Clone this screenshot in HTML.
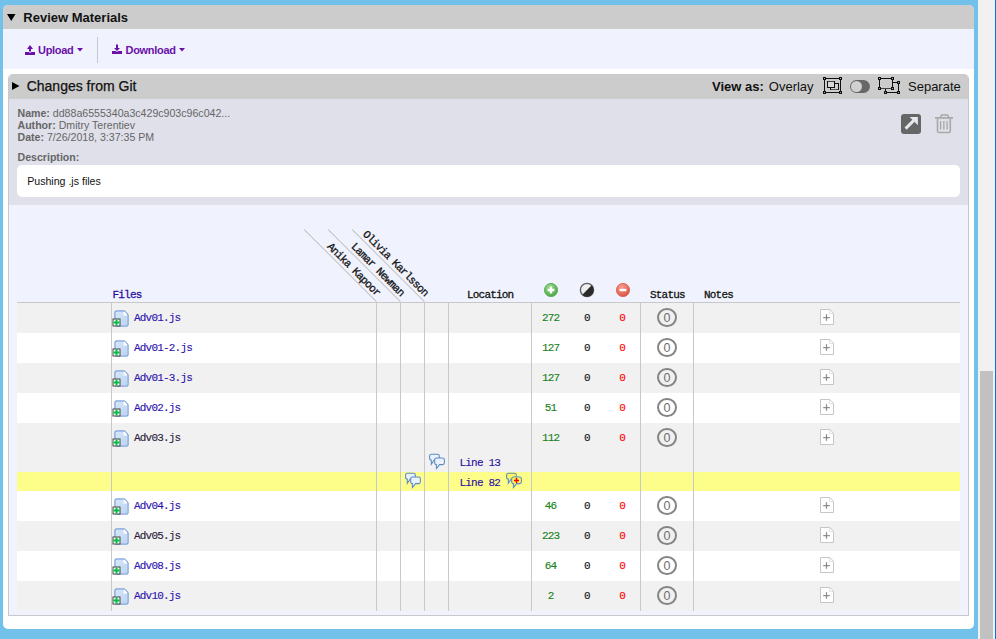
<!DOCTYPE html>
<html><head><meta charset="utf-8">
<style>
*{margin:0;padding:0;box-sizing:border-box}
html,body{width:996px;height:639px;overflow:hidden}
body{background:#72c1ea;position:relative;font-family:"Liberation Sans",sans-serif}
.a{position:absolute}
.t{position:absolute;white-space:nowrap;line-height:1}
.m{font-family:"Liberation Mono",monospace;-webkit-text-stroke:0.12px currentColor}
</style></head><body>
<div class="a" style="left:978px;top:0;width:17px;height:639px;background:#f1f1f1"></div>
<div class="a" style="left:980px;top:371px;width:13px;height:268px;background:#c1c1c1"></div>
<div class="a" style="left:995px;top:0;width:1px;height:639px;background:#0078d7"></div>
<div class="a" style="left:3px;top:5px;width:971px;height:624px;background:#fff;border-radius:5px;overflow:hidden"><div class="a" style="left:0;top:0;width:971px;height:24px;background:#cccccc"></div><div class="a" style="left:0;top:24px;width:971px;height:40px;background:#f0f3fe"></div></div>
<svg class="a" style="left:7px;top:14px" width="9" height="7" viewBox="0 0 9 7"><path d="M0 0H8.5L4.25 7Z" fill="#000"/></svg>
<div class="t" style="left:23.3px;top:10.70px;font-size:13px;color:#111;font-weight:bold;">Review Materials</div>
<svg class="a" style="left:24px;top:44px" width="12" height="12" viewBox="0 0 12 12"><path d="M6 1L9 5H7V7.5H5V5H3Z" fill="#6a10a8"/><path d="M1 8H4.5Q6 9.5 7.5 8H11V11H1Z" fill="#6a10a8"/></svg>
<div class="t" style="left:38px;top:44.69px;font-size:11px;color:#6a10a8;font-weight:bold;letter-spacing:-0.3px">Upload</div>
<svg class="a" style="left:77px;top:48px" width="6" height="4" viewBox="0 0 6 4"><path d="M0 0H6L3 3.5Z" fill="#6a10a8"/></svg>
<div class="a" style="left:97px;top:37px;width:1px;height:26px;background:#c8c8d0"></div>
<svg class="a" style="left:111px;top:44px" width="12" height="12" viewBox="0 0 12 12"><path d="M5 0.5H7V4H9L6 7L3 4H5Z" fill="#6a10a8"/><path d="M1 7H4.5Q6 8.5 7.5 7H11V10H1Z" fill="#6a10a8"/></svg>
<div class="t" style="left:125.5px;top:44.69px;font-size:11px;color:#6a10a8;font-weight:bold;letter-spacing:-0.3px">Download</div>
<svg class="a" style="left:179px;top:48px" width="6" height="4" viewBox="0 0 6 4"><path d="M0 0H6L3 3.5Z" fill="#6a10a8"/></svg>
<div class="a" style="left:8px;top:74px;width:961px;height:542px;background:#f0f3fd;border:1px solid #c8c8c8;border-top:none;border-radius:5px 5px 0 0;overflow:hidden"><div class="a" style="left:-1px;top:0;width:961px;height:24.5px;background:#cccccc"></div><div class="a" style="left:0;top:24.5px;width:959px;height:106.5px;background:#dfe0ea"></div></div>
<svg class="a" style="left:11.5px;top:82px" width="8" height="8" viewBox="0 0 8 8"><path d="M0 0L7.5 4L0 8Z" fill="#000"/></svg>
<div class="t" style="left:26.7px;top:78.75px;font-size:14px;color:#111;-webkit-text-stroke:0.25px #111">Changes from Git</div>
<div class="t" style="left:712px;top:80.10px;font-size:13px;color:#111;"><b>View as:</b></div>
<div class="t" style="left:768.8px;top:80.10px;font-size:13px;color:#111;">Overlay</div>
<div class="t" style="left:908px;top:80.10px;font-size:13px;color:#111;">Separate</div>
<svg class="a" style="left:820px;top:75px" width="25" height="21" viewBox="0 0 25 21">
<path d="M4.5 3.5H20.5V17.5H4.5Z" fill="none" stroke="#111" stroke-width="1"/>
<rect x="10.5" y="8.5" width="8" height="6" fill="#cfcfcf" stroke="#111" stroke-width="1"/>
<path d="M11 14.5H18" stroke="#555" stroke-width="1"/>
<rect x="7.5" y="6.5" width="7" height="6" fill="#d8d8d8" stroke="#111" stroke-width="1"/>
<path d="M8 6.5H14" stroke="#444" stroke-width="1"/>
<g fill="#111"><rect x="3" y="2" width="3" height="3"/><rect x="19" y="2" width="3" height="3"/><rect x="3" y="16" width="3" height="3"/><rect x="19" y="16" width="3" height="3"/></g>
<g fill="#9ab"><rect x="4" y="3" width="1" height="1"/><rect x="20" y="3" width="1" height="1"/><rect x="4" y="17" width="1" height="1"/><rect x="20" y="17" width="1" height="1"/></g>
</svg>
<div class="a" style="left:850px;top:80px;width:20px;height:13px;border-radius:6.5px;background:#686868"></div>
<div class="a" style="left:851px;top:81px;width:11px;height:11px;border-radius:50%;background:#d0d0d0"></div>
<svg class="a" style="left:875px;top:75px" width="28" height="21" viewBox="0 0 28 21">
<path d="M4.5 3.5H17.5V13.5H4.5Z" fill="none" stroke="#111" stroke-width="1"/>
<path d="M17.5 7.5H23.5V17.5H10.5V13.5" fill="none" stroke="#111" stroke-width="1"/>
<path d="M5 13.5H17" stroke="#444" stroke-width="1"/>
<g fill="#111"><rect x="3" y="2" width="3" height="3"/><rect x="16" y="2" width="3" height="3"/><rect x="3" y="12" width="3" height="3"/><rect x="16" y="12" width="3" height="3"/>
<rect x="22" y="6" width="3" height="3"/><rect x="22" y="16" width="3" height="3"/><rect x="9" y="16" width="3" height="3"/></g>
<g fill="#9ab"><rect x="4" y="3" width="1" height="1"/><rect x="17" y="3" width="1" height="1"/><rect x="4" y="13" width="1" height="1"/><rect x="17" y="13" width="1" height="1"/>
<rect x="23" y="7" width="1" height="1"/><rect x="23" y="17" width="1" height="1"/><rect x="10" y="17" width="1" height="1"/></g>
</svg>
<div class="t" style="left:17.5px;top:108.43px;font-size:10.6px;color:#666;"><b>Name:</b> dd88a6555340a3c429c903c96c042...</div>
<div class="t" style="left:17.5px;top:120.43px;font-size:10.6px;color:#666;"><b>Author:</b> Dmitry Terentiev</div>
<div class="t" style="left:17.5px;top:132.23px;font-size:10.6px;color:#666;"><b>Date:</b> 7/26/2018, 3:37:35 PM</div>
<div class="t" style="left:17.5px;top:152.43px;font-size:10.6px;color:#666;"><b>Description:</b></div>
<div class="a" style="left:17px;top:165px;width:943px;height:32px;background:#fff;border-radius:5px"></div>
<div class="t" style="left:27.2px;top:176.43px;font-size:10.6px;color:#111;">Pushing .js files</div>
<div class="a" style="left:901px;top:114px;width:20px;height:20px;background:#666;border-radius:3px"></div>
<svg class="a" style="left:901px;top:114px" width="20" height="20" viewBox="0 0 20 20">
<path d="M4.6 14.6L12.6 6.6" stroke="#e8e8f0" stroke-width="2.9"/>
<path d="M8.6 2.9H16.9V11.2Z" fill="#e8e8f0"/>
</svg>
<svg class="a" style="left:931px;top:111px" width="26" height="26" viewBox="0 0 26 26">
<path d="M4 6.9H22" stroke="#a8a8a8" stroke-width="1.7"/>
<path d="M9.3 6.6L10.6 4H16.6L17.9 6.6" fill="none" stroke="#a8a8a8" stroke-width="1.5"/>
<path d="M6.5 7.5V20Q6.5 21.5 8 21.5H17.8Q19.3 21.5 19.3 20V7.5" fill="none" stroke="#a8a8a8" stroke-width="1.6"/>
<path d="M9.6 10V18.4M12.85 10V18.4M16.1 10V18.4" stroke="#a8a8a8" stroke-width="1.3"/>
</svg>
<div class="t m" style="left:112.5px;top:289.77px;font-size:11px;letter-spacing:-0.8px;color:#2a10a0;-webkit-text-stroke:0.28px currentColor">Files</div>
<div class="t m" style="left:467px;top:289.77px;font-size:11px;letter-spacing:-0.8px;color:#111;-webkit-text-stroke:0.28px currentColor">Location</div>
<div class="t m" style="left:650px;top:289.77px;font-size:11px;letter-spacing:-0.8px;color:#111;-webkit-text-stroke:0.28px currentColor">Status</div>
<div class="t m" style="left:704px;top:289.77px;font-size:11px;letter-spacing:-0.8px;color:#111;-webkit-text-stroke:0.28px currentColor">Notes</div>
<svg class="a" style="left:543px;top:282px" width="16" height="16" viewBox="0 0 16 16">
<defs><radialGradient id="gg" cx="0.4" cy="0.3" r="0.8"><stop offset="0" stop-color="#9fdc8f"/><stop offset="1" stop-color="#3f9f3a"/></radialGradient>
<radialGradient id="rg" cx="0.4" cy="0.3" r="0.8"><stop offset="0" stop-color="#f6a090"/><stop offset="1" stop-color="#d9483a"/></radialGradient></defs>
<circle cx="8" cy="8" r="6.6" fill="url(#gg)" stroke="#62b25c" stroke-width="1"/>
<path d="M8 4.6V11.4M4.6 8H11.4" stroke="#fff" stroke-width="2.4"/>
</svg>
<svg class="a" style="left:579px;top:282px" width="16" height="16" viewBox="0 0 16 16">
<circle cx="8" cy="8" r="6.6" fill="#efefef" stroke="#5e5e5e" stroke-width="1.3"/>
<path d="M12.7 3.3A6.6 6.6 0 0 1 3.3 12.7Z" fill="#2b2b2b"/>
</svg>
<svg class="a" style="left:615px;top:282px" width="16" height="16" viewBox="0 0 16 16">
<circle cx="8" cy="8" r="6.6" fill="url(#rg)" stroke="#e06a5c" stroke-width="1"/>
<path d="M4.6 8H11.4" stroke="#fff" stroke-width="2.4"/>
</svg>
<div class="a" style="left:274px;top:286px;width:102px;height:16px;border-bottom:1px solid #c4c4c4;transform-origin:100% 100%;transform:rotate(45deg)"><div class="t m" style="right:3.5px;bottom:0.5px;font-size:11px;letter-spacing:-0.75px;color:#111;-webkit-text-stroke:0.28px #111">Anika Kapoor</div></div>
<div class="a" style="left:298px;top:286px;width:102px;height:16px;border-bottom:1px solid #c4c4c4;transform-origin:100% 100%;transform:rotate(45deg)"><div class="t m" style="right:3.5px;bottom:0.5px;font-size:11px;letter-spacing:-0.75px;color:#111;-webkit-text-stroke:0.28px #111">Lamar Newman</div></div>
<div class="a" style="left:322px;top:286px;width:102px;height:16px;border-bottom:1px solid #c4c4c4;transform-origin:100% 100%;transform:rotate(45deg)"><div class="t m" style="right:3.5px;bottom:0.5px;font-size:11px;letter-spacing:-0.75px;color:#111;-webkit-text-stroke:0.28px #111">Olivia Karlsson</div></div>
<div class="a" style="left:17px;top:302px;width:943px;height:1px;background:#c8c8c8"></div>
<div class="a" style="left:17px;top:303px;width:943px;height:30px;background:#f1f1f1"></div>
<div class="a" style="left:17px;top:333px;width:943px;height:30px;background:#ffffff"></div>
<div class="a" style="left:17px;top:363px;width:943px;height:30px;background:#f1f1f1"></div>
<div class="a" style="left:17px;top:393px;width:943px;height:30px;background:#ffffff"></div>
<div class="a" style="left:17px;top:423px;width:943px;height:49px;background:#f1f1f1"></div>
<div class="a" style="left:17px;top:491px;width:943px;height:30px;background:#ffffff"></div>
<div class="a" style="left:17px;top:521px;width:943px;height:30px;background:#f1f1f1"></div>
<div class="a" style="left:17px;top:551px;width:943px;height:30px;background:#ffffff"></div>
<div class="a" style="left:17px;top:581px;width:943px;height:30px;background:#f1f1f1"></div>
<div class="a" style="left:17px;top:472px;width:943px;height:19px;background:#fdfd8a"></div>
<div class="a" style="left:111px;top:303px;width:1px;height:308px;background:#c8c8c8"></div>
<div class="a" style="left:376px;top:303px;width:1px;height:308px;background:#c8c8c8"></div>
<div class="a" style="left:400px;top:303px;width:1px;height:308px;background:#c8c8c8"></div>
<div class="a" style="left:424px;top:303px;width:1px;height:308px;background:#c8c8c8"></div>
<div class="a" style="left:448px;top:303px;width:1px;height:308px;background:#c8c8c8"></div>
<div class="a" style="left:531px;top:303px;width:1px;height:308px;background:#c8c8c8"></div>
<div class="a" style="left:640px;top:303px;width:1px;height:308px;background:#c8c8c8"></div>
<div class="a" style="left:693px;top:303px;width:1px;height:308px;background:#c8c8c8"></div>
<svg class="a" style="left:111.5px;top:309.5px" width="17" height="17" viewBox="0 0 17 17">
<defs><linearGradient id="fg0" x1="0" y1="0" x2="1" y2="1"><stop offset="0" stop-color="#d6e6f8"/><stop offset="1" stop-color="#bcd5f2"/></linearGradient></defs>
<path d="M4 1H12.6L16 4.4V15Q16 16 15 16H4Q3 16 3 15V2Q3 1 4 1Z" fill="#fff" stroke="#4b80cf" stroke-width="1"/>
<path d="M4 2H11.5V5.5H15V15H4Z" fill="url(#fg0)"/>
<rect x="1" y="9" width="7" height="7" fill="#fff" stroke="#444" stroke-width="1"/>
<path d="M3.5 9.5h2v6h-2z M1.5 11.5h6v2h-6z" fill="#00c040"/>
</svg>
<div class="t m" style="left:134px;top:312.57px;font-size:11px;letter-spacing:-0.8px;color:#2c12ac;">Adv01.js</div>
<div class="t m" style="left:520.2px;width:60px;text-align:center;top:312.57px;font-size:11px;letter-spacing:-0.8px;text-indent:0.8px;color:#158015">272</div>
<div class="t m" style="left:556.4px;width:60px;text-align:center;top:312.57px;font-size:11px;letter-spacing:-0.8px;text-indent:0.8px;color:#111">0</div>
<div class="t m" style="left:591.7px;width:60px;text-align:center;top:312.57px;font-size:11px;letter-spacing:-0.8px;text-indent:0.8px;color:#ff0000">0</div>
<div class="a" style="left:657.3px;top:308px;width:19.6px;height:19.2px;border:2px solid #858585;border-radius:50%"></div>
<div class="t" style="left:657px;top:312px;width:20px;text-align:center;font-family:'Liberation Sans';font-size:12.5px;color:#6e6e6e">0</div>
<svg class="a" style="left:820px;top:309px" width="15" height="17" viewBox="0 0 15 17">
<path d="M0.5 0.5H9.8L13.5 4.2V15.5H0.5Z" fill="#fff" stroke="#c6c6c6" stroke-width="1"/>
<path d="M9.5 1V4.5H13" fill="none" stroke="#e4e4e4" stroke-width="1"/>
<path d="M6.5 5.2V11.8M3.2 8.5H9.8" stroke="#8c8c8c" stroke-width="1.25"/>
</svg>
<svg class="a" style="left:111.5px;top:339.5px" width="17" height="17" viewBox="0 0 17 17">
<defs><linearGradient id="fg1" x1="0" y1="0" x2="1" y2="1"><stop offset="0" stop-color="#d6e6f8"/><stop offset="1" stop-color="#bcd5f2"/></linearGradient></defs>
<path d="M4 1H12.6L16 4.4V15Q16 16 15 16H4Q3 16 3 15V2Q3 1 4 1Z" fill="#fff" stroke="#4b80cf" stroke-width="1"/>
<path d="M4 2H11.5V5.5H15V15H4Z" fill="url(#fg1)"/>
<rect x="1" y="9" width="7" height="7" fill="#fff" stroke="#444" stroke-width="1"/>
<path d="M3.5 9.5h2v6h-2z M1.5 11.5h6v2h-6z" fill="#00c040"/>
</svg>
<div class="t m" style="left:134px;top:342.57px;font-size:11px;letter-spacing:-0.8px;color:#2c12ac;">Adv01-2.js</div>
<div class="t m" style="left:520.2px;width:60px;text-align:center;top:342.57px;font-size:11px;letter-spacing:-0.8px;text-indent:0.8px;color:#158015">127</div>
<div class="t m" style="left:556.4px;width:60px;text-align:center;top:342.57px;font-size:11px;letter-spacing:-0.8px;text-indent:0.8px;color:#111">0</div>
<div class="t m" style="left:591.7px;width:60px;text-align:center;top:342.57px;font-size:11px;letter-spacing:-0.8px;text-indent:0.8px;color:#ff0000">0</div>
<div class="a" style="left:657.3px;top:338px;width:19.6px;height:19.2px;border:2px solid #858585;border-radius:50%"></div>
<div class="t" style="left:657px;top:342px;width:20px;text-align:center;font-family:'Liberation Sans';font-size:12.5px;color:#6e6e6e">0</div>
<svg class="a" style="left:820px;top:339px" width="15" height="17" viewBox="0 0 15 17">
<path d="M0.5 0.5H9.8L13.5 4.2V15.5H0.5Z" fill="#fff" stroke="#c6c6c6" stroke-width="1"/>
<path d="M9.5 1V4.5H13" fill="none" stroke="#e4e4e4" stroke-width="1"/>
<path d="M6.5 5.2V11.8M3.2 8.5H9.8" stroke="#8c8c8c" stroke-width="1.25"/>
</svg>
<svg class="a" style="left:111.5px;top:369.5px" width="17" height="17" viewBox="0 0 17 17">
<defs><linearGradient id="fg2" x1="0" y1="0" x2="1" y2="1"><stop offset="0" stop-color="#d6e6f8"/><stop offset="1" stop-color="#bcd5f2"/></linearGradient></defs>
<path d="M4 1H12.6L16 4.4V15Q16 16 15 16H4Q3 16 3 15V2Q3 1 4 1Z" fill="#fff" stroke="#4b80cf" stroke-width="1"/>
<path d="M4 2H11.5V5.5H15V15H4Z" fill="url(#fg2)"/>
<rect x="1" y="9" width="7" height="7" fill="#fff" stroke="#444" stroke-width="1"/>
<path d="M3.5 9.5h2v6h-2z M1.5 11.5h6v2h-6z" fill="#00c040"/>
</svg>
<div class="t m" style="left:134px;top:372.57px;font-size:11px;letter-spacing:-0.8px;color:#2c12ac;">Adv01-3.js</div>
<div class="t m" style="left:520.2px;width:60px;text-align:center;top:372.57px;font-size:11px;letter-spacing:-0.8px;text-indent:0.8px;color:#158015">127</div>
<div class="t m" style="left:556.4px;width:60px;text-align:center;top:372.57px;font-size:11px;letter-spacing:-0.8px;text-indent:0.8px;color:#111">0</div>
<div class="t m" style="left:591.7px;width:60px;text-align:center;top:372.57px;font-size:11px;letter-spacing:-0.8px;text-indent:0.8px;color:#ff0000">0</div>
<div class="a" style="left:657.3px;top:368px;width:19.6px;height:19.2px;border:2px solid #858585;border-radius:50%"></div>
<div class="t" style="left:657px;top:372px;width:20px;text-align:center;font-family:'Liberation Sans';font-size:12.5px;color:#6e6e6e">0</div>
<svg class="a" style="left:820px;top:369px" width="15" height="17" viewBox="0 0 15 17">
<path d="M0.5 0.5H9.8L13.5 4.2V15.5H0.5Z" fill="#fff" stroke="#c6c6c6" stroke-width="1"/>
<path d="M9.5 1V4.5H13" fill="none" stroke="#e4e4e4" stroke-width="1"/>
<path d="M6.5 5.2V11.8M3.2 8.5H9.8" stroke="#8c8c8c" stroke-width="1.25"/>
</svg>
<svg class="a" style="left:111.5px;top:399.5px" width="17" height="17" viewBox="0 0 17 17">
<defs><linearGradient id="fg3" x1="0" y1="0" x2="1" y2="1"><stop offset="0" stop-color="#d6e6f8"/><stop offset="1" stop-color="#bcd5f2"/></linearGradient></defs>
<path d="M4 1H12.6L16 4.4V15Q16 16 15 16H4Q3 16 3 15V2Q3 1 4 1Z" fill="#fff" stroke="#4b80cf" stroke-width="1"/>
<path d="M4 2H11.5V5.5H15V15H4Z" fill="url(#fg3)"/>
<rect x="1" y="9" width="7" height="7" fill="#fff" stroke="#444" stroke-width="1"/>
<path d="M3.5 9.5h2v6h-2z M1.5 11.5h6v2h-6z" fill="#00c040"/>
</svg>
<div class="t m" style="left:134px;top:402.57px;font-size:11px;letter-spacing:-0.8px;color:#2c12ac;">Adv02.js</div>
<div class="t m" style="left:520.2px;width:60px;text-align:center;top:402.57px;font-size:11px;letter-spacing:-0.8px;text-indent:0.8px;color:#158015">51</div>
<div class="t m" style="left:556.4px;width:60px;text-align:center;top:402.57px;font-size:11px;letter-spacing:-0.8px;text-indent:0.8px;color:#111">0</div>
<div class="t m" style="left:591.7px;width:60px;text-align:center;top:402.57px;font-size:11px;letter-spacing:-0.8px;text-indent:0.8px;color:#ff0000">0</div>
<div class="a" style="left:657.3px;top:398px;width:19.6px;height:19.2px;border:2px solid #858585;border-radius:50%"></div>
<div class="t" style="left:657px;top:402px;width:20px;text-align:center;font-family:'Liberation Sans';font-size:12.5px;color:#6e6e6e">0</div>
<svg class="a" style="left:820px;top:399px" width="15" height="17" viewBox="0 0 15 17">
<path d="M0.5 0.5H9.8L13.5 4.2V15.5H0.5Z" fill="#fff" stroke="#c6c6c6" stroke-width="1"/>
<path d="M9.5 1V4.5H13" fill="none" stroke="#e4e4e4" stroke-width="1"/>
<path d="M6.5 5.2V11.8M3.2 8.5H9.8" stroke="#8c8c8c" stroke-width="1.25"/>
</svg>
<svg class="a" style="left:111.5px;top:429.5px" width="17" height="17" viewBox="0 0 17 17">
<defs><linearGradient id="fg4" x1="0" y1="0" x2="1" y2="1"><stop offset="0" stop-color="#d6e6f8"/><stop offset="1" stop-color="#bcd5f2"/></linearGradient></defs>
<path d="M4 1H12.6L16 4.4V15Q16 16 15 16H4Q3 16 3 15V2Q3 1 4 1Z" fill="#fff" stroke="#4b80cf" stroke-width="1"/>
<path d="M4 2H11.5V5.5H15V15H4Z" fill="url(#fg4)"/>
<rect x="1" y="9" width="7" height="7" fill="#fff" stroke="#444" stroke-width="1"/>
<path d="M3.5 9.5h2v6h-2z M1.5 11.5h6v2h-6z" fill="#00c040"/>
</svg>
<div class="t m" style="left:134px;top:432.57px;font-size:11px;letter-spacing:-0.8px;color:#2a1a38;">Adv03.js</div>
<div class="t m" style="left:520.2px;width:60px;text-align:center;top:432.57px;font-size:11px;letter-spacing:-0.8px;text-indent:0.8px;color:#158015">112</div>
<div class="t m" style="left:556.4px;width:60px;text-align:center;top:432.57px;font-size:11px;letter-spacing:-0.8px;text-indent:0.8px;color:#111">0</div>
<div class="t m" style="left:591.7px;width:60px;text-align:center;top:432.57px;font-size:11px;letter-spacing:-0.8px;text-indent:0.8px;color:#ff0000">0</div>
<div class="a" style="left:657.3px;top:428px;width:19.6px;height:19.2px;border:2px solid #858585;border-radius:50%"></div>
<div class="t" style="left:657px;top:432px;width:20px;text-align:center;font-family:'Liberation Sans';font-size:12.5px;color:#6e6e6e">0</div>
<svg class="a" style="left:820px;top:429px" width="15" height="17" viewBox="0 0 15 17">
<path d="M0.5 0.5H9.8L13.5 4.2V15.5H0.5Z" fill="#fff" stroke="#c6c6c6" stroke-width="1"/>
<path d="M9.5 1V4.5H13" fill="none" stroke="#e4e4e4" stroke-width="1"/>
<path d="M6.5 5.2V11.8M3.2 8.5H9.8" stroke="#8c8c8c" stroke-width="1.25"/>
</svg>
<svg class="a" style="left:111.5px;top:497.5px" width="17" height="17" viewBox="0 0 17 17">
<defs><linearGradient id="fg5" x1="0" y1="0" x2="1" y2="1"><stop offset="0" stop-color="#d6e6f8"/><stop offset="1" stop-color="#bcd5f2"/></linearGradient></defs>
<path d="M4 1H12.6L16 4.4V15Q16 16 15 16H4Q3 16 3 15V2Q3 1 4 1Z" fill="#fff" stroke="#4b80cf" stroke-width="1"/>
<path d="M4 2H11.5V5.5H15V15H4Z" fill="url(#fg5)"/>
<rect x="1" y="9" width="7" height="7" fill="#fff" stroke="#444" stroke-width="1"/>
<path d="M3.5 9.5h2v6h-2z M1.5 11.5h6v2h-6z" fill="#00c040"/>
</svg>
<div class="t m" style="left:134px;top:500.57px;font-size:11px;letter-spacing:-0.8px;color:#2c12ac;">Adv04.js</div>
<div class="t m" style="left:520.2px;width:60px;text-align:center;top:500.57px;font-size:11px;letter-spacing:-0.8px;text-indent:0.8px;color:#158015">46</div>
<div class="t m" style="left:556.4px;width:60px;text-align:center;top:500.57px;font-size:11px;letter-spacing:-0.8px;text-indent:0.8px;color:#111">0</div>
<div class="t m" style="left:591.7px;width:60px;text-align:center;top:500.57px;font-size:11px;letter-spacing:-0.8px;text-indent:0.8px;color:#ff0000">0</div>
<div class="a" style="left:657.3px;top:496px;width:19.6px;height:19.2px;border:2px solid #858585;border-radius:50%"></div>
<div class="t" style="left:657px;top:500px;width:20px;text-align:center;font-family:'Liberation Sans';font-size:12.5px;color:#6e6e6e">0</div>
<svg class="a" style="left:820px;top:497px" width="15" height="17" viewBox="0 0 15 17">
<path d="M0.5 0.5H9.8L13.5 4.2V15.5H0.5Z" fill="#fff" stroke="#c6c6c6" stroke-width="1"/>
<path d="M9.5 1V4.5H13" fill="none" stroke="#e4e4e4" stroke-width="1"/>
<path d="M6.5 5.2V11.8M3.2 8.5H9.8" stroke="#8c8c8c" stroke-width="1.25"/>
</svg>
<svg class="a" style="left:111.5px;top:527.5px" width="17" height="17" viewBox="0 0 17 17">
<defs><linearGradient id="fg6" x1="0" y1="0" x2="1" y2="1"><stop offset="0" stop-color="#d6e6f8"/><stop offset="1" stop-color="#bcd5f2"/></linearGradient></defs>
<path d="M4 1H12.6L16 4.4V15Q16 16 15 16H4Q3 16 3 15V2Q3 1 4 1Z" fill="#fff" stroke="#4b80cf" stroke-width="1"/>
<path d="M4 2H11.5V5.5H15V15H4Z" fill="url(#fg6)"/>
<rect x="1" y="9" width="7" height="7" fill="#fff" stroke="#444" stroke-width="1"/>
<path d="M3.5 9.5h2v6h-2z M1.5 11.5h6v2h-6z" fill="#00c040"/>
</svg>
<div class="t m" style="left:134px;top:530.57px;font-size:11px;letter-spacing:-0.8px;color:#2a1a38;">Adv05.js</div>
<div class="t m" style="left:520.2px;width:60px;text-align:center;top:530.57px;font-size:11px;letter-spacing:-0.8px;text-indent:0.8px;color:#158015">223</div>
<div class="t m" style="left:556.4px;width:60px;text-align:center;top:530.57px;font-size:11px;letter-spacing:-0.8px;text-indent:0.8px;color:#111">0</div>
<div class="t m" style="left:591.7px;width:60px;text-align:center;top:530.57px;font-size:11px;letter-spacing:-0.8px;text-indent:0.8px;color:#ff0000">0</div>
<div class="a" style="left:657.3px;top:526px;width:19.6px;height:19.2px;border:2px solid #858585;border-radius:50%"></div>
<div class="t" style="left:657px;top:530px;width:20px;text-align:center;font-family:'Liberation Sans';font-size:12.5px;color:#6e6e6e">0</div>
<svg class="a" style="left:820px;top:527px" width="15" height="17" viewBox="0 0 15 17">
<path d="M0.5 0.5H9.8L13.5 4.2V15.5H0.5Z" fill="#fff" stroke="#c6c6c6" stroke-width="1"/>
<path d="M9.5 1V4.5H13" fill="none" stroke="#e4e4e4" stroke-width="1"/>
<path d="M6.5 5.2V11.8M3.2 8.5H9.8" stroke="#8c8c8c" stroke-width="1.25"/>
</svg>
<svg class="a" style="left:111.5px;top:557.5px" width="17" height="17" viewBox="0 0 17 17">
<defs><linearGradient id="fg7" x1="0" y1="0" x2="1" y2="1"><stop offset="0" stop-color="#d6e6f8"/><stop offset="1" stop-color="#bcd5f2"/></linearGradient></defs>
<path d="M4 1H12.6L16 4.4V15Q16 16 15 16H4Q3 16 3 15V2Q3 1 4 1Z" fill="#fff" stroke="#4b80cf" stroke-width="1"/>
<path d="M4 2H11.5V5.5H15V15H4Z" fill="url(#fg7)"/>
<rect x="1" y="9" width="7" height="7" fill="#fff" stroke="#444" stroke-width="1"/>
<path d="M3.5 9.5h2v6h-2z M1.5 11.5h6v2h-6z" fill="#00c040"/>
</svg>
<div class="t m" style="left:134px;top:560.57px;font-size:11px;letter-spacing:-0.8px;color:#2c12ac;">Adv08.js</div>
<div class="t m" style="left:520.2px;width:60px;text-align:center;top:560.57px;font-size:11px;letter-spacing:-0.8px;text-indent:0.8px;color:#158015">64</div>
<div class="t m" style="left:556.4px;width:60px;text-align:center;top:560.57px;font-size:11px;letter-spacing:-0.8px;text-indent:0.8px;color:#111">0</div>
<div class="t m" style="left:591.7px;width:60px;text-align:center;top:560.57px;font-size:11px;letter-spacing:-0.8px;text-indent:0.8px;color:#ff0000">0</div>
<div class="a" style="left:657.3px;top:556px;width:19.6px;height:19.2px;border:2px solid #858585;border-radius:50%"></div>
<div class="t" style="left:657px;top:560px;width:20px;text-align:center;font-family:'Liberation Sans';font-size:12.5px;color:#6e6e6e">0</div>
<svg class="a" style="left:820px;top:557px" width="15" height="17" viewBox="0 0 15 17">
<path d="M0.5 0.5H9.8L13.5 4.2V15.5H0.5Z" fill="#fff" stroke="#c6c6c6" stroke-width="1"/>
<path d="M9.5 1V4.5H13" fill="none" stroke="#e4e4e4" stroke-width="1"/>
<path d="M6.5 5.2V11.8M3.2 8.5H9.8" stroke="#8c8c8c" stroke-width="1.25"/>
</svg>
<svg class="a" style="left:111.5px;top:587.5px" width="17" height="17" viewBox="0 0 17 17">
<defs><linearGradient id="fg8" x1="0" y1="0" x2="1" y2="1"><stop offset="0" stop-color="#d6e6f8"/><stop offset="1" stop-color="#bcd5f2"/></linearGradient></defs>
<path d="M4 1H12.6L16 4.4V15Q16 16 15 16H4Q3 16 3 15V2Q3 1 4 1Z" fill="#fff" stroke="#4b80cf" stroke-width="1"/>
<path d="M4 2H11.5V5.5H15V15H4Z" fill="url(#fg8)"/>
<rect x="1" y="9" width="7" height="7" fill="#fff" stroke="#444" stroke-width="1"/>
<path d="M3.5 9.5h2v6h-2z M1.5 11.5h6v2h-6z" fill="#00c040"/>
</svg>
<div class="t m" style="left:134px;top:590.57px;font-size:11px;letter-spacing:-0.8px;color:#2c12ac;">Adv10.js</div>
<div class="t m" style="left:520.2px;width:60px;text-align:center;top:590.57px;font-size:11px;letter-spacing:-0.8px;text-indent:0.8px;color:#158015">2</div>
<div class="t m" style="left:556.4px;width:60px;text-align:center;top:590.57px;font-size:11px;letter-spacing:-0.8px;text-indent:0.8px;color:#111">0</div>
<div class="t m" style="left:591.7px;width:60px;text-align:center;top:590.57px;font-size:11px;letter-spacing:-0.8px;text-indent:0.8px;color:#ff0000">0</div>
<div class="a" style="left:657.3px;top:586px;width:19.6px;height:19.2px;border:2px solid #858585;border-radius:50%"></div>
<div class="t" style="left:657px;top:590px;width:20px;text-align:center;font-family:'Liberation Sans';font-size:12.5px;color:#6e6e6e">0</div>
<svg class="a" style="left:820px;top:587px" width="15" height="17" viewBox="0 0 15 17">
<path d="M0.5 0.5H9.8L13.5 4.2V15.5H0.5Z" fill="#fff" stroke="#c6c6c6" stroke-width="1"/>
<path d="M9.5 1V4.5H13" fill="none" stroke="#e4e4e4" stroke-width="1"/>
<path d="M6.5 5.2V11.8M3.2 8.5H9.8" stroke="#8c8c8c" stroke-width="1.25"/>
</svg>
<svg class="a" style="left:428px;top:453px" width="18" height="17" viewBox="0 0 18 17">
<path d="M3.4 1.2H9.5Q11.3 1.2 11.3 3V5.2Q11.3 7 9.5 7H6.2L3.3 11.3V7Q1.6 7 1.6 5.2V3Q1.6 1.2 3.4 1.2Z" fill="#e9f1fb" stroke="#5b8ac6" stroke-width="1.05"/>
<path d="M8.5 5H14.6Q16.4 5 16.4 6.8V9.8Q16.4 11.6 14.6 11.6H11.6L8.4 15.5V11.6Q6.7 11.6 6.7 9.8V6.8Q6.7 5 8.5 5Z" fill="#e9f1fb" stroke="#5b8ac6" stroke-width="1.05"/>

</svg>
<div class="t m" style="left:459.5px;top:457.57px;font-size:11px;letter-spacing:-0.8px;color:#2a10a0;">Line 13</div>
<svg class="a" style="left:404px;top:472px" width="18" height="17" viewBox="0 0 18 17">
<path d="M3.4 1.2H9.5Q11.3 1.2 11.3 3V5.2Q11.3 7 9.5 7H6.2L3.3 11.3V7Q1.6 7 1.6 5.2V3Q1.6 1.2 3.4 1.2Z" fill="#e9f1fb" stroke="#5b8ac6" stroke-width="1.05"/>
<path d="M8.5 5H14.6Q16.4 5 16.4 6.8V9.8Q16.4 11.6 14.6 11.6H11.6L8.4 15.5V11.6Q6.7 11.6 6.7 9.8V6.8Q6.7 5 8.5 5Z" fill="#e9f1fb" stroke="#5b8ac6" stroke-width="1.05"/>

</svg>
<div class="t m" style="left:459.5px;top:477.77px;font-size:11px;letter-spacing:-0.8px;color:#2a10a0;">Line 82</div>
<svg class="a" style="left:505px;top:472px" width="18" height="17" viewBox="0 0 18 17">
<path d="M3.4 1.2H9.5Q11.3 1.2 11.3 3V5.2Q11.3 7 9.5 7H6.2L3.3 11.3V7Q1.6 7 1.6 5.2V3Q1.6 1.2 3.4 1.2Z" fill="#fbf75a" stroke="#5b8ac6" stroke-width="1.05"/>
<path d="M8.5 5H14.6Q16.4 5 16.4 6.8V9.8Q16.4 11.6 14.6 11.6H11.6L8.4 15.5V11.6Q6.7 11.6 6.7 9.8V6.8Q6.7 5 8.5 5Z" fill="#fbf75a" stroke="#5b8ac6" stroke-width="1.05"/>
<path d="M11.5 5.9V10.9M9 8.4H14" stroke="#f00" stroke-width="1.5"/>
</svg>
</body></html>
